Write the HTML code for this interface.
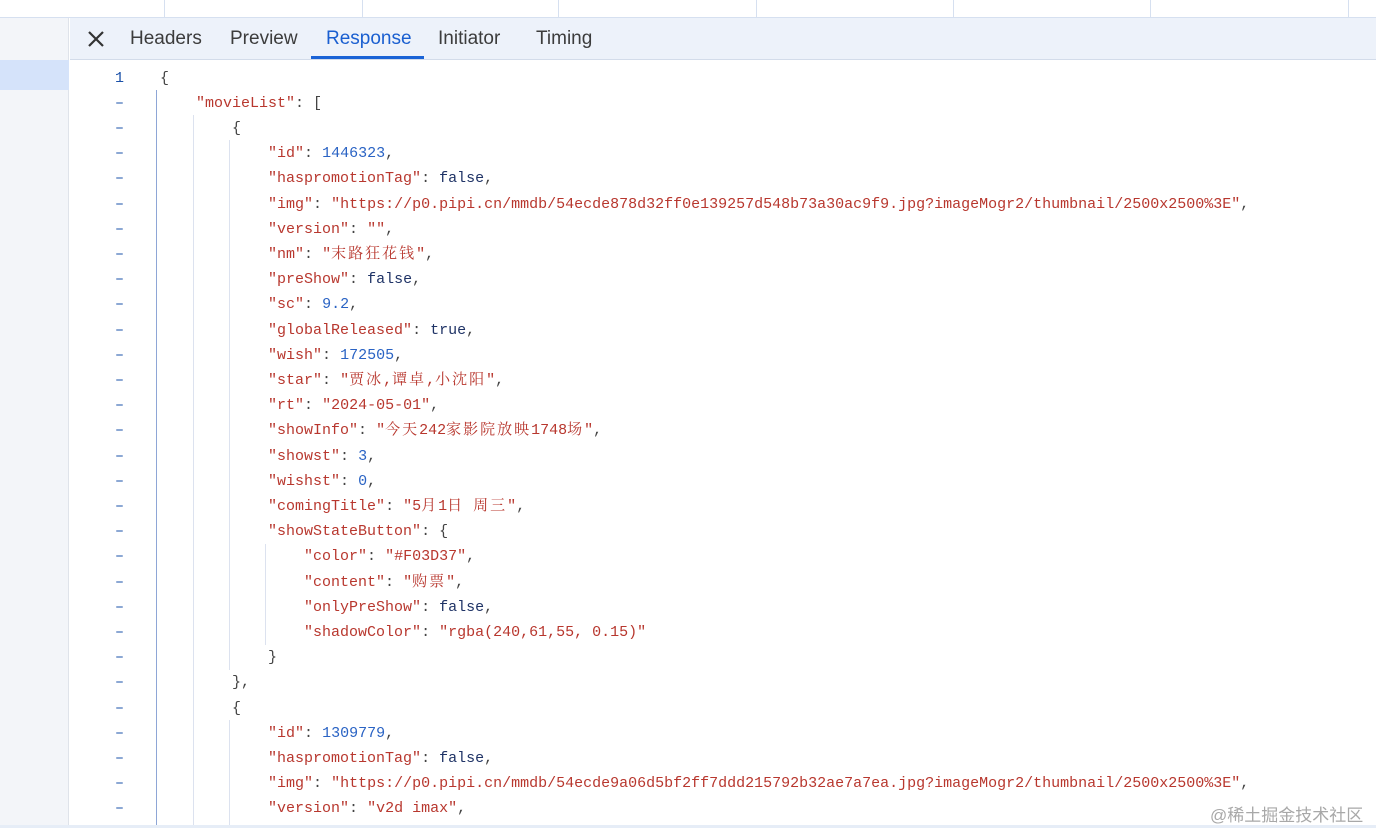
<!DOCTYPE html>
<html><head><meta charset="utf-8"><style>
*{margin:0;padding:0;box-sizing:border-box}
body{width:1376px;height:828px;overflow:hidden;background:#fff;position:relative;font-family:"Liberation Sans",sans-serif}
.top{position:absolute;left:0;top:0;width:1376px;height:18px;background:#fff;border-bottom:1px solid #d6e0f0}
.sep{position:absolute;top:0;width:1px;height:18px;background:#d6e0f0}
.left{position:absolute;left:0;top:18px;width:69px;height:810px;background:#f3f5f9;border-right:1px solid #dfe3ea}
.sel{position:absolute;left:0;top:60px;width:69px;height:30px;background:#d5e3fa}
.tabs{position:absolute;left:70px;top:18px;width:1306px;height:42px;background:#edf2fa;border-bottom:1px solid #d3dcea}
.tab{position:absolute;top:10px;font-size:19px;color:#3c3c3c}
.x{position:absolute;left:86px;top:29px;width:20px;height:20px}
.ul{position:absolute;left:311px;top:56px;width:113px;height:3px;background:#1a63d6}
.code{position:absolute;left:70px;top:61px;right:0;bottom:0;font-family:"Liberation Mono","Noto Serif CJK SC",monospace;font-size:15px}
.row{position:absolute;left:0;height:25px;line-height:25px;white-space:pre;color:#444}
.ln{position:absolute;width:54px;text-align:right;color:#1a50a8}
.t{position:absolute;left:90px}
.k,.s{color:#b8372e}
.n{color:#2a63c4}
.b{color:#1f3366}
.c{letter-spacing:2px}
.g{position:absolute;width:1px;background:#dce2ef}
.foot{position:absolute;left:0;top:825px;width:1376px;height:3px;background:#e6edf7}
.wm{position:absolute;left:1210px;top:801px;font-family:"Liberation Sans","Noto Sans CJK SC",sans-serif;font-size:17px;color:#a8a8a8}
</style></head><body>
<div class="top">
<div class="sep" style="left:164px"></div><div class="sep" style="left:362px"></div><div class="sep" style="left:558px"></div><div class="sep" style="left:756px"></div><div class="sep" style="left:953px"></div><div class="sep" style="left:1150px"></div><div class="sep" style="left:1348px"></div>
</div>
<div class="left"></div><div class="sel"></div>
<div class="tabs">
<span class="tab" style="left:60px">Headers</span>
<span class="tab" style="left:160px">Preview</span>
<span class="tab" style="left:256px;color:#1a5fd0">Response</span>
<span class="tab" style="left:368px">Initiator</span>
<span class="tab" style="left:466px">Timing</span>
</div>
<svg class="x" viewBox="0 0 20 20"><path d="M3 3L17 17M17 3L3 17" stroke="#333" stroke-width="2.2"/></svg>
<div class="ul"></div>
<div class="g" style="left:156px;top:90px;height:738px;background:#8ea6d6"></div>
<div class="g" style="left:193px;top:115px;height:713px"></div>
<div class="g" style="left:229px;top:140px;height:530px"></div>
<div class="g" style="left:229px;top:720px;height:108px"></div>
<div class="g" style="left:265px;top:544px;height:101px"></div>
<div class="code" id="c">
<div class="row" style="top:5px"><span class="ln">1</span><span class="t">{</span></div>
<div class="row" style="top:30px"><span class="ln">–</span><span class="t">    <span class="k">"movieList"</span>: [</span></div>
<div class="row" style="top:55px"><span class="ln">–</span><span class="t">        {</span></div>
<div class="row" style="top:80px"><span class="ln">–</span><span class="t">            <span class="k">"id"</span>: <span class="n">1446323</span>,</span></div>
<div class="row" style="top:105px"><span class="ln">–</span><span class="t">            <span class="k">"haspromotionTag"</span>: <span class="b">false</span>,</span></div>
<div class="row" style="top:131px"><span class="ln">–</span><span class="t">            <span class="k">"img"</span>: <span class="s">"https://p0.pipi.cn/mmdb/54ecde878d32ff0e139257d548b73a30ac9f9.jpg?imageMogr2/thumbnail/2500x2500%3E"</span>,</span></div>
<div class="row" style="top:156px"><span class="ln">–</span><span class="t">            <span class="k">"version"</span>: <span class="s">""</span>,</span></div>
<div class="row" style="top:181px"><span class="ln">–</span><span class="t">            <span class="k">"nm"</span>: <span class="s">"<span class="c">末路狂花钱</span>"</span>,</span></div>
<div class="row" style="top:206px"><span class="ln">–</span><span class="t">            <span class="k">"preShow"</span>: <span class="b">false</span>,</span></div>
<div class="row" style="top:231px"><span class="ln">–</span><span class="t">            <span class="k">"sc"</span>: <span class="n">9.2</span>,</span></div>
<div class="row" style="top:257px"><span class="ln">–</span><span class="t">            <span class="k">"globalReleased"</span>: <span class="b">true</span>,</span></div>
<div class="row" style="top:282px"><span class="ln">–</span><span class="t">            <span class="k">"wish"</span>: <span class="n">172505</span>,</span></div>
<div class="row" style="top:307px"><span class="ln">–</span><span class="t">            <span class="k">"star"</span>: <span class="s">"<span class="c">贾冰</span>,<span class="c">谭卓</span>,<span class="c">小沈阳</span>"</span>,</span></div>
<div class="row" style="top:332px"><span class="ln">–</span><span class="t">            <span class="k">"rt"</span>: <span class="s">"2024-05-01"</span>,</span></div>
<div class="row" style="top:357px"><span class="ln">–</span><span class="t">            <span class="k">"showInfo"</span>: <span class="s">"<span class="c">今天</span>242<span class="c">家影院放映</span>1748<span class="c">场</span>"</span>,</span></div>
<div class="row" style="top:383px"><span class="ln">–</span><span class="t">            <span class="k">"showst"</span>: <span class="n">3</span>,</span></div>
<div class="row" style="top:408px"><span class="ln">–</span><span class="t">            <span class="k">"wishst"</span>: <span class="n">0</span>,</span></div>
<div class="row" style="top:433px"><span class="ln">–</span><span class="t">            <span class="k">"comingTitle"</span>: <span class="s">"5<span class="c">月</span>1<span class="c">日</span> <span class="c">周三</span>"</span>,</span></div>
<div class="row" style="top:458px"><span class="ln">–</span><span class="t">            <span class="k">"showStateButton"</span>: {</span></div>
<div class="row" style="top:483px"><span class="ln">–</span><span class="t">                <span class="k">"color"</span>: <span class="s">"#F03D37"</span>,</span></div>
<div class="row" style="top:509px"><span class="ln">–</span><span class="t">                <span class="k">"content"</span>: <span class="s">"<span class="c">购票</span>"</span>,</span></div>
<div class="row" style="top:534px"><span class="ln">–</span><span class="t">                <span class="k">"onlyPreShow"</span>: <span class="b">false</span>,</span></div>
<div class="row" style="top:559px"><span class="ln">–</span><span class="t">                <span class="k">"shadowColor"</span>: <span class="s">"rgba(240,61,55, 0.15)"</span></span></div>
<div class="row" style="top:584px"><span class="ln">–</span><span class="t">            }</span></div>
<div class="row" style="top:609px"><span class="ln">–</span><span class="t">        },</span></div>
<div class="row" style="top:635px"><span class="ln">–</span><span class="t">        {</span></div>
<div class="row" style="top:660px"><span class="ln">–</span><span class="t">            <span class="k">"id"</span>: <span class="n">1309779</span>,</span></div>
<div class="row" style="top:685px"><span class="ln">–</span><span class="t">            <span class="k">"haspromotionTag"</span>: <span class="b">false</span>,</span></div>
<div class="row" style="top:710px"><span class="ln">–</span><span class="t">            <span class="k">"img"</span>: <span class="s">"https://p0.pipi.cn/mmdb/54ecde9a06d5bf2ff7ddd215792b32ae7a7ea.jpg?imageMogr2/thumbnail/2500x2500%3E"</span>,</span></div>
<div class="row" style="top:735px"><span class="ln">–</span><span class="t">            <span class="k">"version"</span>: <span class="s">"v2d imax"</span>,</span></div>
</div>
<div class="foot"></div>
<div class="wm">@稀土掘金技术社区</div>
</body></html>
